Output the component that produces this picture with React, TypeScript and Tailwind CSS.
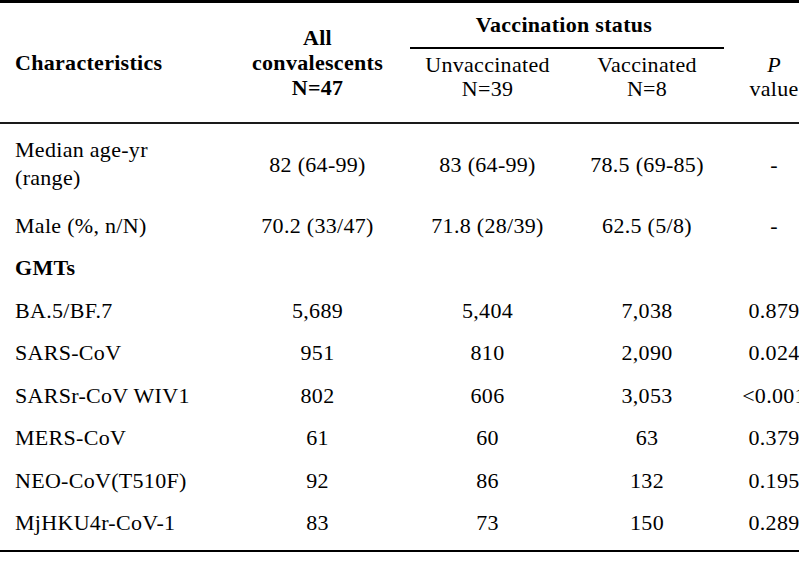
const rows: { label: string; all: string; unvac: string; vac: string; p: string; bold?: boolean }[] = [
  { label: 'Male (%, n/N)', all: '70.2 (33/47)', unvac: '71.8 (28/39)', vac: '62.5 (5/8)', p: '-' },
  { label: 'GMTs', all: '', unvac: '', vac: '', p: '', bold: true },
  { label: 'BA.5/BF.7', all: '5,689', unvac: '5,404', vac: '7,038', p: '0.879' },
  { label: 'SARS-CoV', all: '951', unvac: '810', vac: '2,090', p: '0.024' },
  { label: 'SARSr-CoV WIV1', all: '802', unvac: '606', vac: '3,053', p: '<0.001' },
  { label: 'MERS-CoV', all: '61', unvac: '60', vac: '63', p: '0.379' },
  { label: 'NEO-CoV(T510F)', all: '92', unvac: '86', vac: '132', p: '0.195' },
  { label: 'MjHKU4r-CoV-1', all: '83', unvac: '73', vac: '150', p: '0.289' },
];

const cols = 'grid grid-cols-[230px_175px_165px_154px_100px]';

function App() {
  return (
    <div className="w-[799px] h-[581px] overflow-hidden bg-white text-black font-['Liberation_Serif','Times_New_Roman',serif] text-[22px] tracking-[0.3px]">
      <div className="w-[824px]">
        <div className="h-[3px] bg-black" />

        {/* header */}
        <div className={`${cols} grid-rows-[46px_73px] border-b-2 border-[#1a1a1a]`}>
          <div className="col-start-1 row-start-1 row-span-2 flex items-center pl-[15px] font-bold leading-[24px]">
            Characteristics
          </div>
          <div className="col-start-2 row-start-1 row-span-2 flex flex-col items-center justify-center text-center font-bold leading-[25px]">
            <span>All</span>
            <span>convalescents</span>
            <span>N=47</span>
          </div>
          <div className="col-start-3 col-span-2 row-start-1 ml-[5px] border-b-2 border-black pt-[9px] text-center font-bold leading-[25px]">
            <span className="-ml-[6px]">Vaccination status</span>
          </div>
          <div className="col-start-3 row-start-2 pt-[4px] text-center leading-[24px]">
            Unvaccinated
            <br />
            N=39
          </div>
          <div className="col-start-4 row-start-2 pt-[4px] text-center leading-[24px]">
            Vaccinated
            <br />
            N=8
          </div>
          <div className="col-start-5 row-start-2 pt-[4px] text-center leading-[24px]">
            <i>P</i>
            <br />
            value
          </div>
        </div>

        {/* body */}
        <div className={`${cols} h-[80px] items-center`}>
          <div className="pl-[15px] leading-[28px]">
            Median age-yr
            <br />
            (range)
          </div>
          <div className="text-center">82 (64-99)</div>
          <div className="text-center">83 (64-99)</div>
          <div className="text-center">78.5 (69-85)</div>
          <div className="text-center">-</div>
        </div>
        {rows.map((r) => (
          <div key={r.label} className={`${cols} h-[42.5px] items-center`}>
            <div className={r.bold ? 'pl-[15px] font-bold' : 'pl-[15px]'}>{r.label}</div>
            <div className="text-center">{r.all}</div>
            <div className="text-center">{r.unvac}</div>
            <div className="text-center">{r.vac}</div>
            <div className="text-center">{r.p}</div>
          </div>
        ))}
        <div className="mt-[5.5px] h-[2px] bg-black" />
      </div>
    </div>
  );
}

export default App;
